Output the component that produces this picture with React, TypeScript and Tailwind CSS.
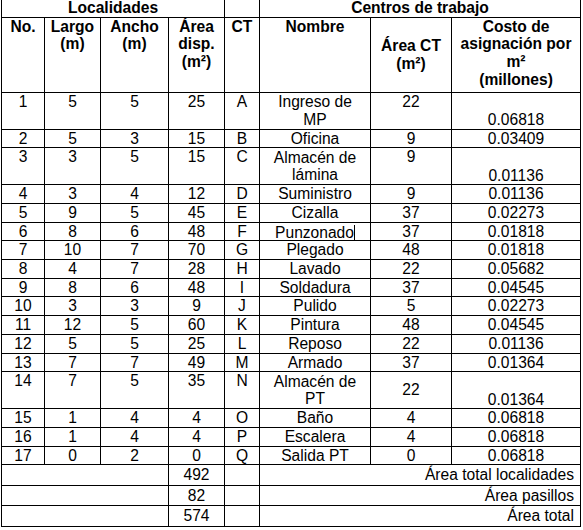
import React from "react";

type Row = {
  no: number;
  largo: number;
  ancho: number;
  area: number;
  ct: string;
  nombre: React.ReactNode;
  areaCt: number;
  costo: string;
  dbl?: boolean;
  ctAlign?: "top" | "middle";
};

const rows: Row[] = [
  { no: 1, largo: 5, ancho: 5, area: 25, ct: "A", nombre: <>Ingreso de<br />MP</>, areaCt: 22, costo: "0.06818", dbl: true, ctAlign: "top" },
  { no: 2, largo: 5, ancho: 3, area: 15, ct: "B", nombre: "Oficina", areaCt: 9, costo: "0.03409" },
  { no: 3, largo: 3, ancho: 5, area: 15, ct: "C", nombre: <>Almacén de<br />lámina</>, areaCt: 9, costo: "0.01136", dbl: true, ctAlign: "top" },
  { no: 4, largo: 3, ancho: 4, area: 12, ct: "D", nombre: "Suministro", areaCt: 9, costo: "0.01136" },
  { no: 5, largo: 9, ancho: 5, area: 45, ct: "E", nombre: "Cizalla", areaCt: 37, costo: "0.02273" },
  { no: 6, largo: 8, ancho: 6, area: 48, ct: "F", nombre: <span className="inline-block border-r border-black leading-[15px] align-bottom">Punzonado</span>, areaCt: 37, costo: "0.01818" },
  { no: 7, largo: 10, ancho: 7, area: 70, ct: "G", nombre: "Plegado", areaCt: 48, costo: "0.01818" },
  { no: 8, largo: 4, ancho: 7, area: 28, ct: "H", nombre: "Lavado", areaCt: 22, costo: "0.05682" },
  { no: 9, largo: 8, ancho: 6, area: 48, ct: "I", nombre: "Soldadura", areaCt: 37, costo: "0.04545" },
  { no: 10, largo: 3, ancho: 3, area: 9, ct: "J", nombre: "Pulido", areaCt: 5, costo: "0.02273" },
  { no: 11, largo: 12, ancho: 5, area: 60, ct: "K", nombre: "Pintura", areaCt: 48, costo: "0.04545" },
  { no: 12, largo: 5, ancho: 5, area: 25, ct: "L", nombre: "Reposo", areaCt: 22, costo: "0.01136" },
  { no: 13, largo: 7, ancho: 7, area: 49, ct: "M", nombre: "Armado", areaCt: 37, costo: "0.01364" },
  { no: 14, largo: 7, ancho: 5, area: 35, ct: "N", nombre: <>Almacén de<br />PT</>, areaCt: 22, costo: "0.01364", dbl: true, ctAlign: "middle" },
  { no: 15, largo: 1, ancho: 4, area: 4, ct: "O", nombre: "Baño", areaCt: 4, costo: "0.06818" },
  { no: 16, largo: 1, ancho: 4, area: 4, ct: "P", nombre: "Escalera", areaCt: 4, costo: "0.06818" },
  { no: 17, largo: 0, ancho: 2, area: 0, ct: "Q", nombre: "Salida PT", areaCt: 0, costo: "0.06818" },
];

const td = "border border-black px-[5px] py-0 text-center align-top";

const totals = [
  { v: 492, label: "Área total localidades" },
  { v: 82, label: "Área pasillos" },
  { v: 574, label: "Área total" },
];

export default function App() {
  return (
    <div className="w-[583px] h-[530px] bg-white text-black overflow-hidden font-['Liberation_Sans',Arial,sans-serif] text-[15.6px] leading-[17.7px]">
      <div className="pl-[1px]">
        <table className="border-collapse table-fixed w-[579px]">
          <colgroup>
            <col className="w-[43px]" />
            <col className="w-[56px]" />
            <col className="w-[68px]" />
            <col className="w-[56px]" />
            <col className="w-[35px]" />
            <col className="w-[111px]" />
            <col className="w-[81px]" />
            <col className="w-[129px]" />
          </colgroup>
          <tbody>
            <tr className="h-[17px]">
              <td colSpan={4} className={`${td} border-t-0 font-bold leading-[16px]`}>Localidades</td>
              <td className={`${td} border-t-0`}></td>
              <td colSpan={3} className={`${td} border-t-0 font-bold leading-[16px]`}>Centros de trabajo</td>
            </tr>
            <tr className="h-[75px] font-bold">
              <td className={td}>No.</td>
              <td className={td}>Largo<br />(m)</td>
              <td className={td}>Ancho<br />(m)</td>
              <td className={td}>Área<br />disp.<br />(m²)</td>
              <td className={td}>CT</td>
              <td className={td}>Nombre</td>
              <td className={`${td} !align-middle`}>Área CT<br />(m²)</td>
              <td className={td}>Costo de<br />asignación por<br />m²<br />(millones)</td>
            </tr>
            {rows.map((r) => (
              <tr key={r.no} className={r.dbl ? "h-[37px]" : "h-[18.6px]"}>
                <td className={td}>{r.no}</td>
                <td className={td}>{r.largo}</td>
                <td className={td}>{r.ancho}</td>
                <td className={td}>{r.area}</td>
                <td className={td}>{r.ct}</td>
                <td className={`${td} !align-middle whitespace-nowrap`}>{r.nombre}</td>
                <td className={`${td} ${r.ctAlign === "middle" ? "!align-middle" : ""}`}>{r.areaCt}</td>
                <td className={`${td} !align-bottom`}>{r.costo}</td>
              </tr>
            ))}
            {totals.map((t) => (
              <tr key={t.v} className="h-[20.5px]">
                <td colSpan={3} className={td}></td>
                <td className={`${td} !align-middle`}>{t.v}</td>
                <td className={td}></td>
                <td colSpan={3} className={`${td} !align-middle !text-right !pr-[6px]`}>{t.label}</td>
              </tr>
            ))}
          </tbody>
        </table>
      </div>
    </div>
  );
}
